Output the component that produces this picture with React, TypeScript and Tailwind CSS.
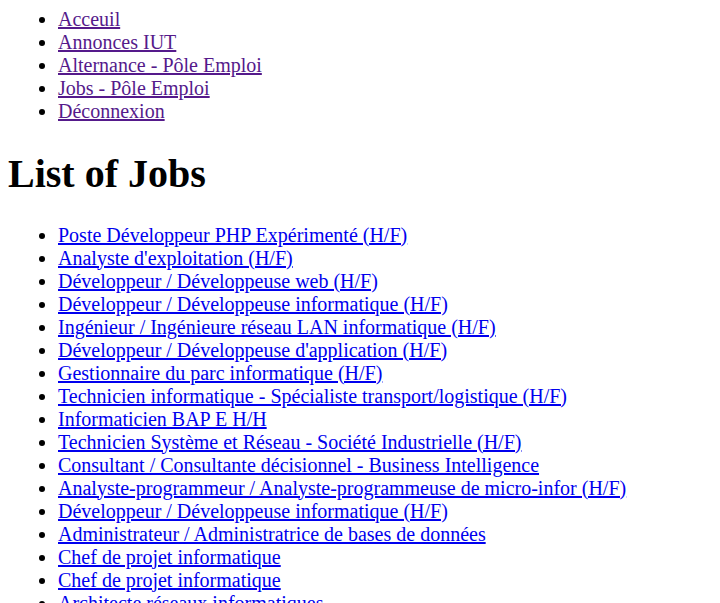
import React from "react";

const nav = [
  "Acceuil",
  "Annonces IUT",
  "Alternance - Pôle Emploi",
  "Jobs - Pôle Emploi",
  "Déconnexion",
];

const jobs = [
  "Poste Développeur PHP Expérimenté (H/F)",
  "Analyste d'exploitation (H/F)",
  "Développeur / Développeuse web (H/F)",
  "Développeur / Développeuse informatique (H/F)",
  "Ingénieur / Ingénieure réseau LAN informatique (H/F)",
  "Développeur / Développeuse d'application (H/F)",
  "Gestionnaire du parc informatique (H/F)",
  "Technicien informatique - Spécialiste transport/logistique (H/F)",
  "Informaticien BAP E H/H",
  "Technicien Système et Réseau - Société Industrielle (H/F)",
  "Consultant / Consultante décisionnel - Business Intelligence",
  "Analyste-programmeur / Analyste-programmeuse de micro-infor (H/F)",
  "Développeur / Développeuse informatique (H/F)",
  "Administrateur / Administratrice de bases de données",
  "Chef de projet informatique",
  "Chef de projet informatique",
  "Architecte réseaux informatiques",
  "Technicien / Technicienne support informatique (H/F)",
  "Développeur / Développeuse web (H/F)",
];

export default function App() {
  return (
    <div className="bg-white text-black p-2 font-['Liberation_Serif',serif] text-[20px] leading-[normal]">
      <ul className="list-disc m-0 pl-[50px]">
        {nav.map((n, i) => (
          <li key={i}>
            <a href="#" className="underline text-[#551a8b]">
              {n}
            </a>
          </li>
        ))}
      </ul>
      <h1 className="text-[40px] font-bold leading-[normal] mt-[26.8px] mb-[26.8px]">
        List of Jobs
      </h1>
      <ul className="list-disc m-0 pl-[50px]">
        {jobs.map((j, i) => (
          <li key={i}>
            <a href="#" className="underline text-[#0000ee]">
              {j}
            </a>
          </li>
        ))}
      </ul>
    </div>
  );
}
